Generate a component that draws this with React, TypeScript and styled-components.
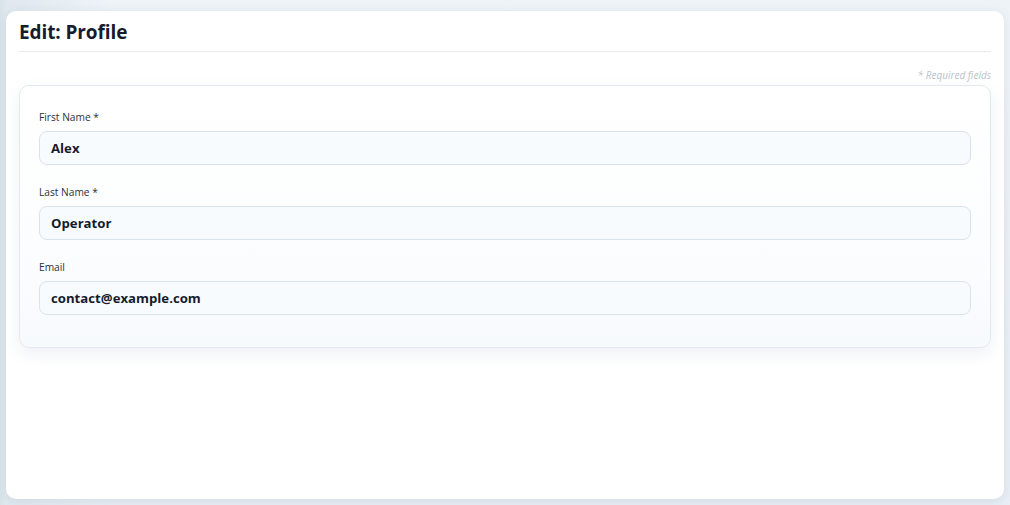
import React from "react";
import styled, { createGlobalStyle } from "styled-components";

const Global = createGlobalStyle`
  html, body { margin: 0; padding: 0; }
  body {
    width: 1010px;
    height: 505px;
    overflow: hidden;
    font-family: "Open Sans", "Noto Sans", sans-serif;
    background: #e8eef4;
  }
`;

const Backdrop = styled.div`
  box-sizing: border-box;
  width: 1010px;
  height: 505px;
  padding: 11px 6px 6px 6px;
  background:
    linear-gradient(90deg, #d6e2e9 0px, #dfe8ee 6px, rgba(233,239,245,0) 110px),
    linear-gradient(180deg, #eef3f8 0%, #e8eef4 100%);
`;

const Modal = styled.div`
  box-sizing: border-box;
  height: 488px;
  background: #ffffff;
  border-radius: 10px;
  box-shadow: 0 2px 10px rgba(120, 140, 160, 0.18);
  padding: 0 13px;
  display: flex;
  flex-direction: column;
`;

const Header = styled.div`
  height: 39px;
  display: flex;
  align-items: center;
  padding-top: 1px;
  border-bottom: 1px solid #e6eaef;
`;

const Title = styled.h1`
  margin: 0;
  font-size: 19px;
  font-weight: 700;
  color: #151c2c;
  letter-spacing: -0.1px;
`;

const Required = styled.div`
  text-align: right;
  font-size: 10px;
  font-style: italic;
  color: #bcc3cb;
  margin-top: 16px;
  height: 17px;
  line-height: 14px;
`;

const Card = styled.div`
  box-sizing: border-box;
  border: 1px solid #e3e9f0;
  border-radius: 10px;
  background: linear-gradient(180deg, #ffffff 0%, #fcfdfe 60%, #f7fafd 100%);
  box-shadow: 0 6px 16px rgba(150, 170, 190, 0.16);
  padding: 24px 19px 32px 19px;
  display: flex;
  flex-direction: column;
  gap: 20px;
`;

const Field = styled.div`
  display: flex;
  flex-direction: column;
  gap: 7px;
`;

const Label = styled.label`
  font-size: 10.2px;
  line-height: 14px;
  color: #2a3140;
`;

const Input = styled.div`
  box-sizing: border-box;
  height: 34px;
  border: 1px solid #d9e3ec;
  border-radius: 8px;
  background: #f8fbfe;
  padding: 0 11px;
  display: flex;
  align-items: center;
  font-size: 13.2px;
  font-weight: 700;
  color: #151c2c;
`;

const fields = [
  { label: "First Name *", value: "Alex" },
  { label: "Last Name *", value: "Operator" },
  { label: "Email", value: "contact@example.com" },
];

export default function App() {
  return (
    <>
      <Global />
      <Backdrop>
        <Modal>
          <Header>
            <Title>Edit: Profile</Title>
          </Header>
          <Required>* Required fields</Required>
          <Card>
            {fields.map((f) => (
              <Field key={f.label}>
                <Label>{f.label}</Label>
                <Input>{f.value}</Input>
              </Field>
            ))}
          </Card>
        </Modal>
      </Backdrop>
    </>
  );
}
